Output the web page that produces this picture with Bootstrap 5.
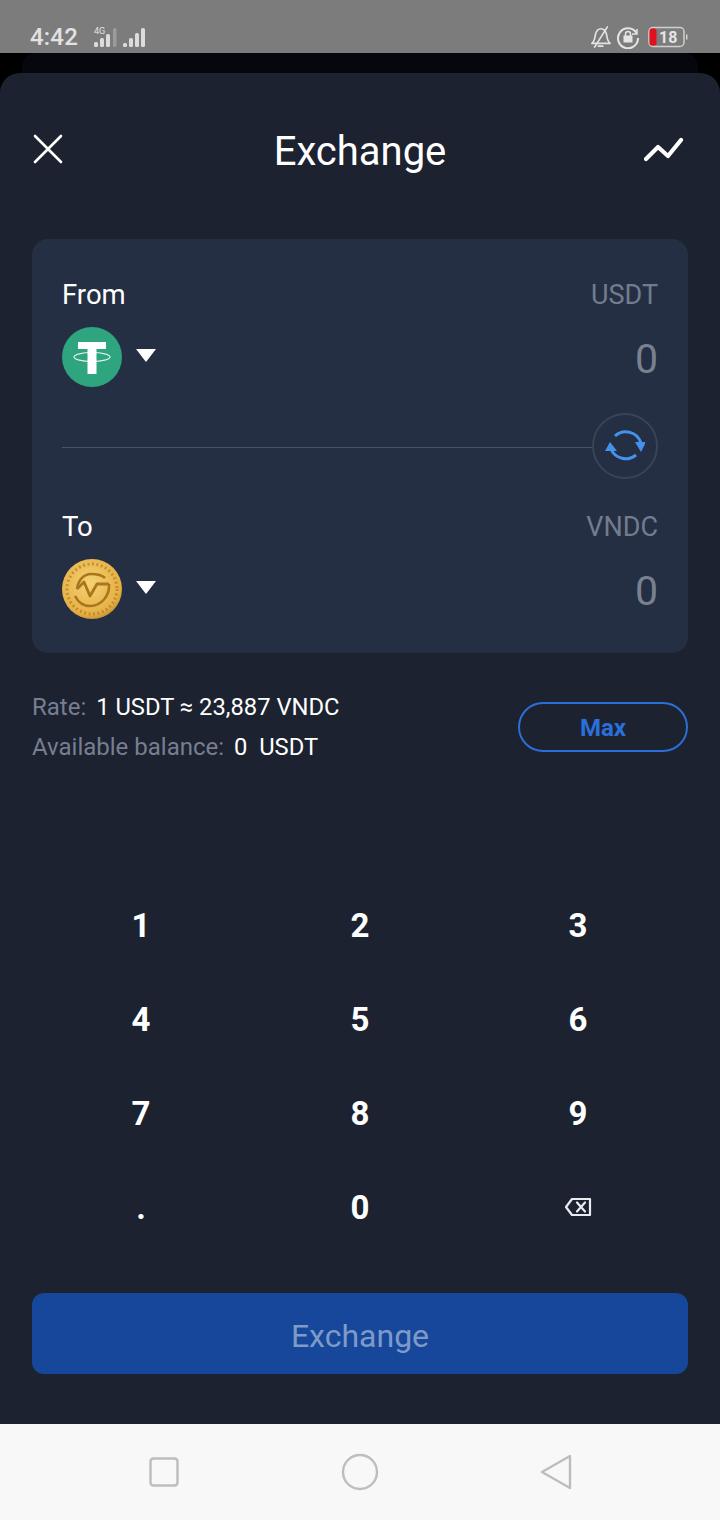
<!DOCTYPE html>
<html lang="en">
<head>
<meta charset="utf-8">
<title>Exchange</title>
<link href="https://cdn.jsdelivr.net/npm/bootstrap@5.3.0/dist/css/bootstrap.min.css" rel="stylesheet">
<style>
html,body{margin:0;height:1520px;overflow:hidden;background:#000;font-family:Roboto,"Liberation Sans",sans-serif}
.screen{width:720px;height:1520px}
.statusbar{height:53px;background:#7c7c7c;color:#e2e2e2;padding:20px 32px 0 30px}
.clock{font-size:24px;font-weight:500;line-height:1;margin-top:1px;letter-spacing:.2px}
.gap-band{height:20px;background:#000}
.gap-inner{height:20px;margin:0 22px;background:#05070c;border-radius:14px 14px 0 0}
.sheet{height:1351px;background:#1c2230;border-radius:20px 20px 0 0;color:#fff}
.head{position:relative;height:166px;padding:0 36px 14px 32px}
.head h1{font-size:40px;font-weight:400;margin:6px 0 0;line-height:1;position:absolute;left:0;right:0;text-align:center;pointer-events:none}
.swapcard{margin:0 32px;height:414px;background:#252f43;border-radius:16px;padding:37px 30px 0}
.lbl{font-size:27.5px;line-height:38px}
.unit{font-size:27px;line-height:38px;color:#727c8e}
.amount{font-size:41px;line-height:48px;color:#78818f;padding-top:4px;box-sizing:content-box}
.pick{height:60px;margin-top:13px}
.coin{width:60px;height:60px;display:block;flex:none}
.caret{width:20px;height:13px;display:block;margin-left:14px;margin-top:-4px}
.divider-row{height:66px;margin-top:26px;margin-bottom:29px}
.rule{height:1px;background:#4a5365;flex:1;margin-top:2px}
.swapbtn{width:66px;height:66px;border:2px solid #3a4456;border-radius:50%;flex:none}
.info{margin:32px 32px 0;height:100px}
.info-text{font-size:23.75px;line-height:40px;margin-top:2px}
.muted-lbl{color:#767f90;margin-right:10px;font-size:24px}
.maxbtn{width:170px;height:50px;border:2px solid #2b6fd8;border-radius:25px;color:#2b6fdb;font-weight:700;font-size:24px;background:transparent;padding:2px 0 0;margin-top:17px}
.keypad{display:grid;grid-template-columns:220px 218px 218px;grid-auto-rows:94px;padding:0 31px;margin-top:93px}
.keyitem{font-size:33px;font-weight:700;display:flex;align-items:center;justify-content:center;line-height:1}
.submit{display:block;width:656px;height:81px;margin:39px 32px 0;background:#17479a;border:0;border-radius:12px;color:#7d9ac9;font-size:32px;padding:4px 0 0}
.navbar-sys{height:96px;background:#f8f8f8;padding:0 148px}
.navbar-sys svg{display:block}
</style>
</head>
<body>
<div class="screen d-flex flex-column">
  <div class="statusbar d-flex align-items-center justify-content-between">
    <div class="d-flex align-items-center">
      <span class="clock">4:42</span>
      <svg width="70" height="26" viewBox="0 0 70 26" class="ms-3" fill="#dcdcdc">
        <text x="0" y="10" font-size="9" font-family="Roboto" fill="#e4e4e4">4G</text>
        <rect x="0" y="18" width="4" height="5" rx="1.5"/><rect x="6" y="14" width="4" height="9" rx="1.5"/><rect x="12" y="10" width="4" height="13" rx="1.5"/><rect x="19" y="4" width="3.500" height="19" rx="1.5" fill="#9b9b9b"/>
        <rect x="29" y="19" width="4" height="4" rx="1.500"/><rect x="35" y="14" width="4" height="9" rx="1.5"/><rect x="41" y="9" width="4" height="14" rx="1.5"/><rect x="47" y="4" width="4" height="19" rx="1.5"/>
      </svg>
    </div>
    <div class="d-flex align-items-center">
      <svg width="22" height="26" viewBox="0 0 24 26" fill="none" stroke="#e4e4e4" stroke-width="1.800" stroke-linecap="round" stroke-linejoin="round">
        <path d="M2 20c3-2 3-5 4-10 1-4 3-6 6-6s5 2 6 6c1 5 1 8 4 10z"/><path d="M9 23h5"/><path d="M19 2 5 24"/>
      </svg>
      <svg width="24" height="24" viewBox="0 0 24 24" fill="none" class="ms-1" stroke="#e4e4e4" stroke-width="2">
        <path d="M20.500 8A10 10 0 1 0 22 13"/><path d="m21 4 0 5-5 0" stroke-width="1.500"/>
        <rect x="7.500" y="10.500" width="9" height="7" fill="#e4e4e4" stroke="none"/><path d="M9.500 11V9a2.500 2.500 0 0 1 5 0v2" stroke-width="1.500"/>
      </svg>
      <svg width="40" height="22" viewBox="0 0 40 22" class="ms-2">
        <rect x="1" y="1.500" width="35" height="19" rx="4" fill="none" stroke="#cfcfcf" stroke-width="1.500"/>
        <rect x="1.500" y="2.500" width="7" height="17" rx="2.500" fill="#e0111c"/>
        <text x="11" y="17" font-size="16" font-weight="700" font-family="Roboto" fill="#e4e4e4">18</text>
        <rect x="38" y="8.500" width="1.500" height="5" fill="#cfcfcf"/>
      </svg>
    </div>
  </div>
  <div class="gap-band"><div class="gap-inner"></div></div>

  <main class="sheet">
    <header class="head d-flex align-items-center justify-content-between">
      <svg width="32" height="32" viewBox="0 0 32 32" stroke="#fff" stroke-width="2.600" stroke-linecap="round"><path d="M3 3l26 26M29 3 3 29"/></svg>
      <h1>Exchange</h1>
      <svg width="40" height="26" viewBox="0 0 40 26" fill="none" stroke="#fff" stroke-width="4.200" stroke-linecap="round" stroke-linejoin="round"><path d="M2 23 14 11l10 9L37 4"/></svg>
    </header>

    <section class="swapcard">
      <div class="d-flex justify-content-between align-items-center"><span class="lbl">From</span><span class="unit">USDT</span></div>
      <div class="pick d-flex align-items-center">
        <svg class="coin" viewBox="0 0 60 60">
          <circle cx="30" cy="30" r="30" fill="#2ea57f"/>
          <path d="M16 15h28v7H34.500v25h-9V22H16z" fill="#fff"/>
          <ellipse cx="30" cy="30" rx="18" ry="4.500" fill="none" stroke="#fff" stroke-width="1.200" opacity=".85"/>
        </svg>
        <svg class="caret" viewBox="0 0 20 13"><path d="M0 0h20L10 13z" fill="#fff"/></svg>
        <span class="amount ms-auto">0</span>
      </div>
      <div class="divider-row d-flex align-items-center">
        <div class="rule"></div>
        <div class="swapbtn d-flex align-items-center justify-content-center">
          <svg width="40" height="36" viewBox="0 0 40 36" fill="none" stroke="#4393ee" stroke-width="3">
            <path d="M10 8A16 16 0 0 1 36 15"/><path d="M31 27A16 16 0 0 1 6 21"/>
            <path d="M30 14h11l-5 10z" fill="#4393ee" stroke="none"/><path d="M12 23H0l5-9z" fill="#4393ee" stroke="none"/>
          </svg>
        </div>
      </div>
      <div class="d-flex justify-content-between align-items-center"><span class="lbl">To</span><span class="unit">VNDC</span></div>
      <div class="pick d-flex align-items-center">
        <svg class="coin" viewBox="0 0 60 60">
          <defs><radialGradient id="gold" cx=".45" cy=".4" r=".7"><stop offset="0" stop-color="#f6d273"/><stop offset=".75" stop-color="#e6b045"/><stop offset="1" stop-color="#a97620"/></radialGradient></defs>
          <circle cx="30" cy="30" r="30" fill="url(#gold)"/>
          <circle cx="30" cy="30" r="25" fill="none" stroke="#a9751c" stroke-width="3" stroke-dasharray="2 2.500" opacity=".6"/>
          <path d="M15 30C16 21 22 15 29 15c6 0 11 1 14 4" fill="none" stroke="#a8761d" stroke-width="2.600"/>
          <path d="M15 30l7-7 6 14 7-12h12" fill="none" stroke="#a8761d" stroke-width="2.800" stroke-linejoin="round"/>
          <path d="M47 25c1 12-8 22-19 22-7 0-12-4-15-10" fill="none" stroke="#a8761d" stroke-width="2.600"/>
        </svg>
        <svg class="caret" viewBox="0 0 20 13"><path d="M0 0h20L10 13z" fill="#fff"/></svg>
        <span class="amount ms-auto">0</span>
      </div>
    </section>

    <section class="info d-flex justify-content-between align-items-start">
      <div class="info-text">
        <div><span class="muted-lbl">Rate:</span>1 USDT ≈ 23,887 VNDC</div>
        <div><span class="muted-lbl">Available balance:</span>0&nbsp; USDT</div>
      </div>
      <button type="button" class="btn maxbtn">Max</button>
    </section>

    <section class="keypad">
      <div class="keyitem">1</div><div class="keyitem">2</div><div class="keyitem">3</div>
      <div class="keyitem">4</div><div class="keyitem">5</div><div class="keyitem">6</div>
      <div class="keyitem">7</div><div class="keyitem">8</div><div class="keyitem">9</div>
      <div class="keyitem">.</div><div class="keyitem">0</div>
      <div class="keyitem">
        <svg width="28" height="20" viewBox="0 0 28 20" fill="none" stroke="#e9edf2" stroke-width="2.200" stroke-linejoin="round" stroke-linecap="round"><path d="M8 2h18v16H8L2 10z"/><path d="m13 5.500 8 9M21 5.500l-8 9"/></svg>
      </div>
    </section>

    <button type="button" class="btn submit">Exchange</button>
  </main>

  <nav class="navbar-sys d-flex align-items-center justify-content-between">
    <svg width="32" height="32" viewBox="0 0 32 32" fill="none" stroke="#bdbdbd" stroke-width="2.400"><rect x="2.500" y="2.500" width="27" height="27" rx="3"/></svg>
    <svg width="38" height="38" viewBox="0 0 38 38" fill="none" stroke="#bdbdbd" stroke-width="2.400"><circle cx="19" cy="19" r="17"/></svg>
    <svg width="32" height="36" viewBox="0 0 32 36" fill="none" stroke="#bdbdbd" stroke-width="2.400" stroke-linejoin="round"><path d="M2 18 30 2v32z"/></svg>
  </nav>
</div>
<script src="https://cdn.jsdelivr.net/npm/bootstrap@5.3.0/dist/js/bootstrap.bundle.min.js"></script>
</body>
</html>
